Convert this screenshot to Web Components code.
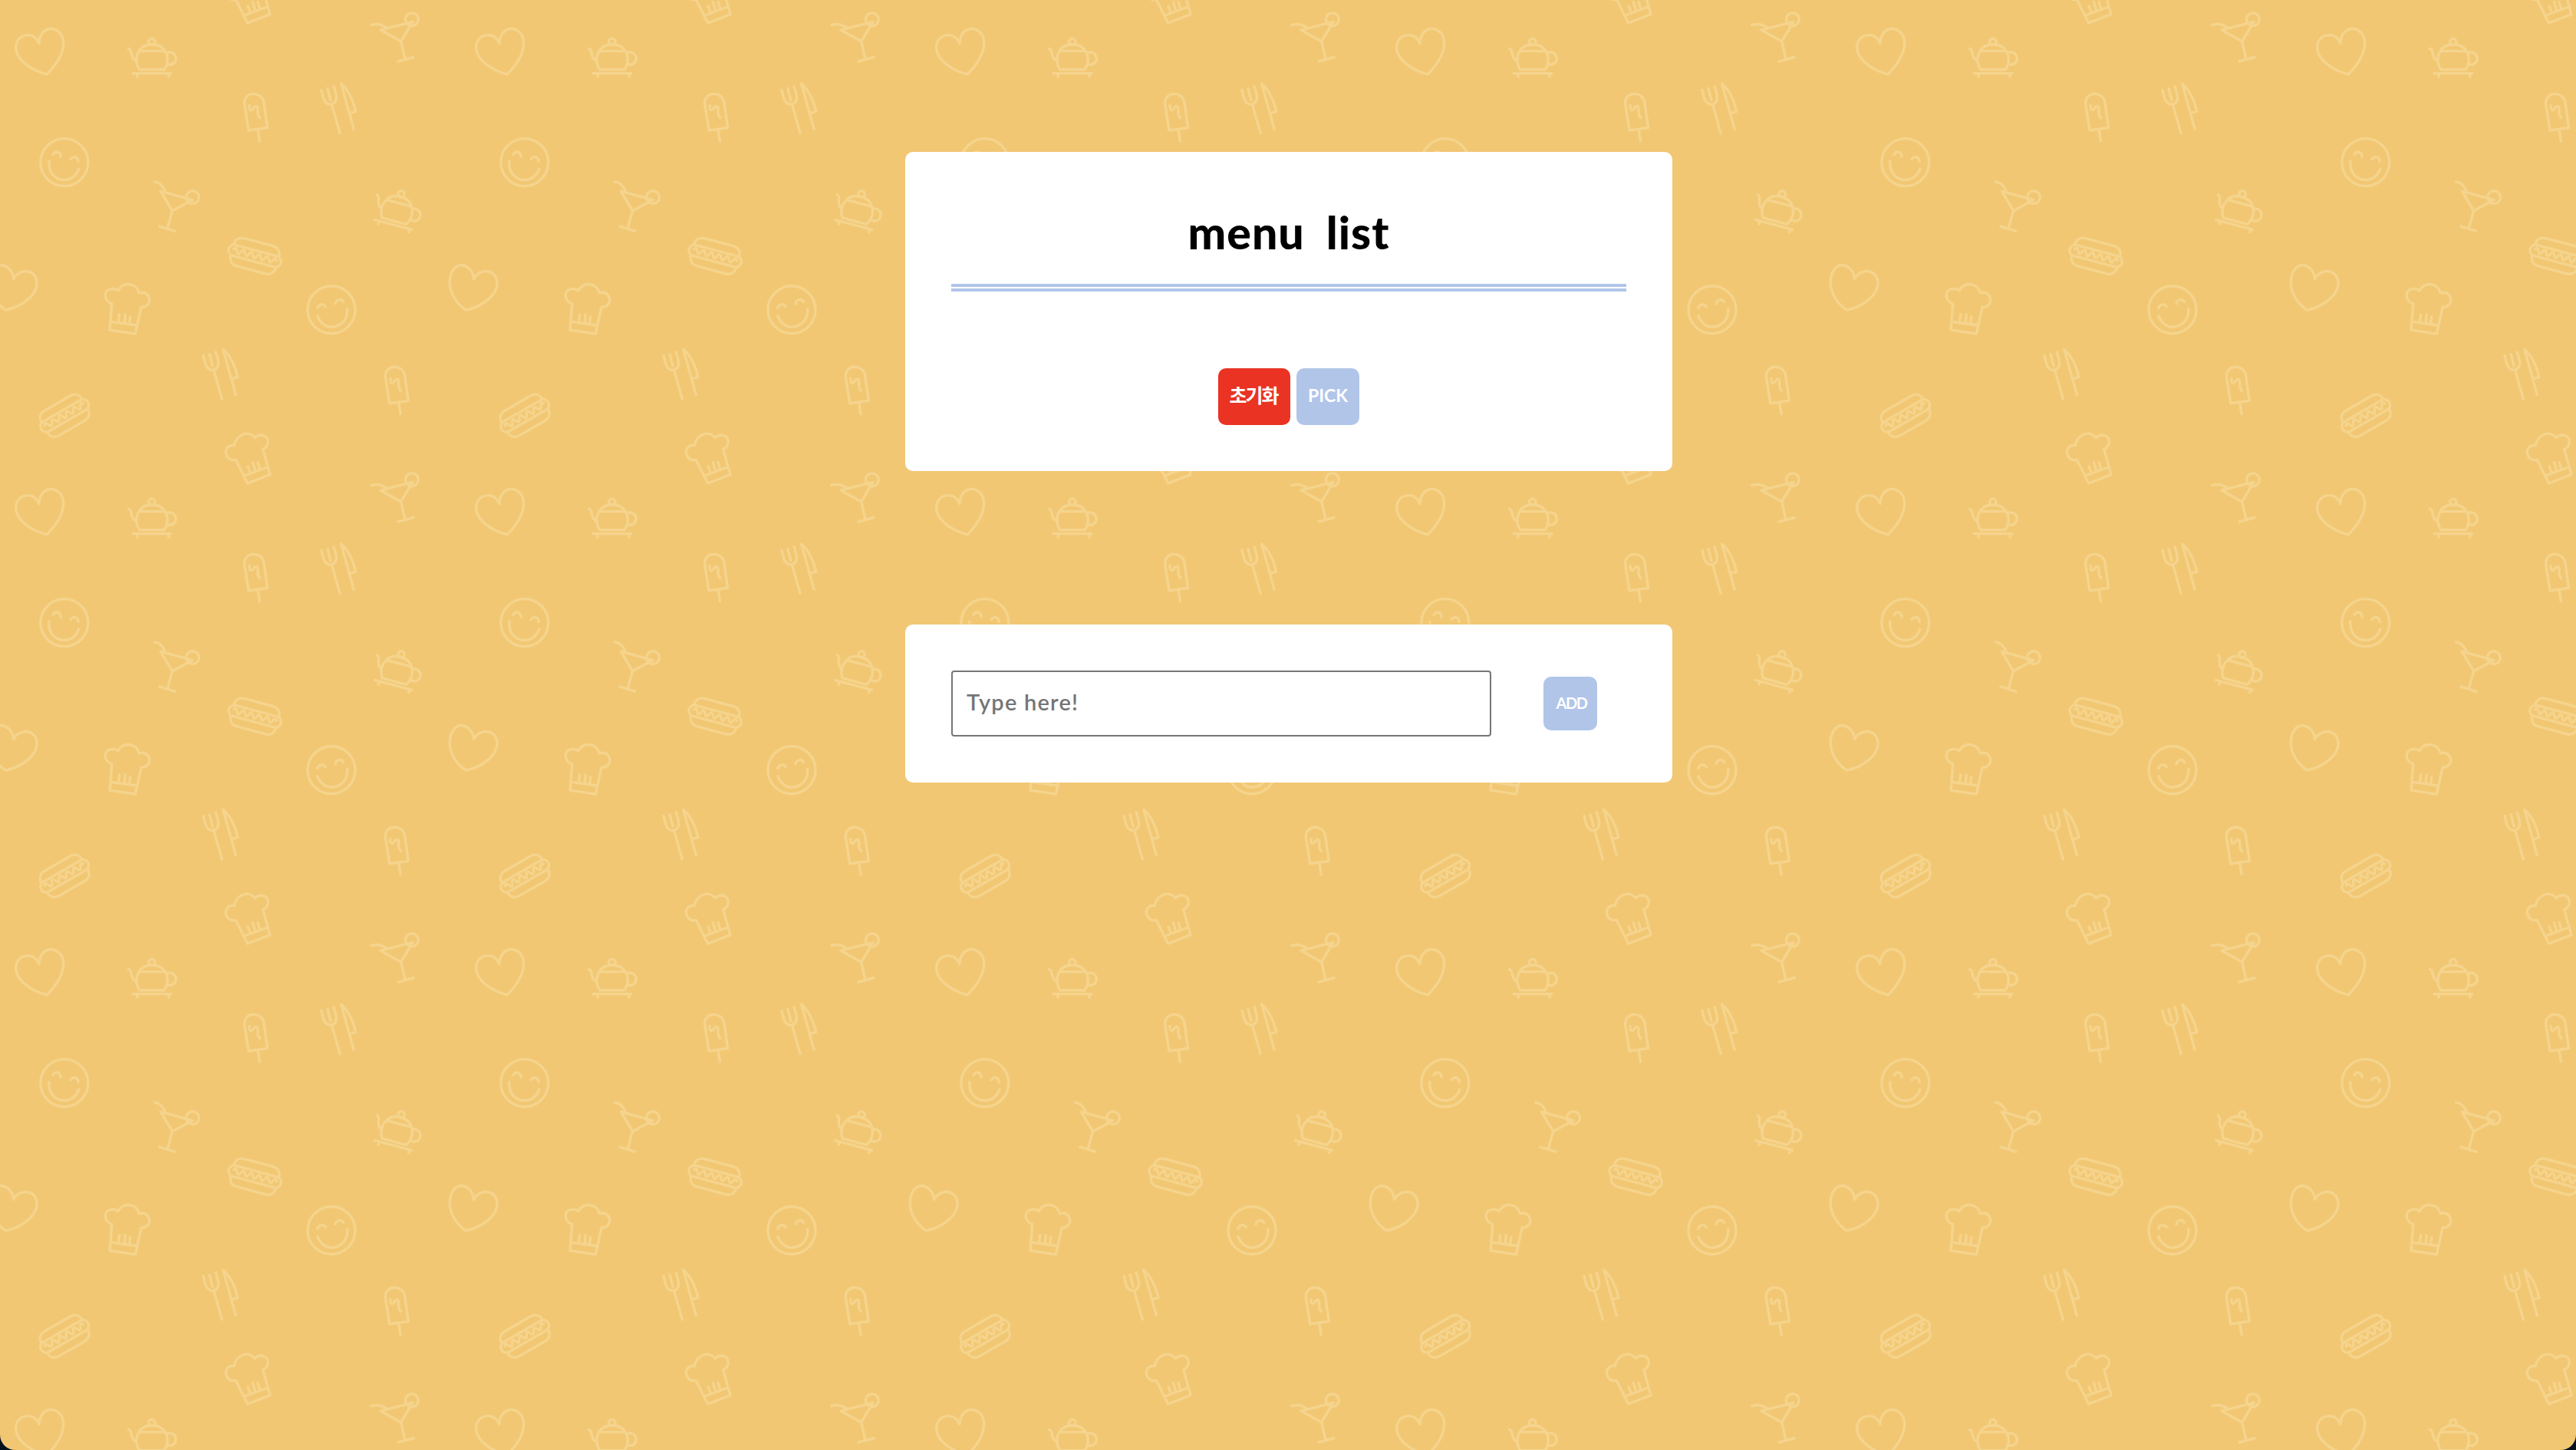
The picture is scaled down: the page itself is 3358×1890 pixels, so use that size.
<!DOCTYPE html>
<html lang="ko">
<head>
<meta charset="utf-8">
<title>menu list</title>
<style>
  html, body { margin: 0; height: 100%; background: #04121f; overflow: hidden; }
  body { font-family: Lato, "Noto Sans CJK KR", sans-serif; }
</style>
</head>
<body>
<menu-app></menu-app>

<script>
const define = (name, html) => customElements.define(name, class extends HTMLElement {
  constructor() {
    super();
    const t = document.createElement('template');
    t.innerHTML = html;
    this.attachShadow({ mode: 'open' }).append(t.content.cloneNode(true));
  }
});

// Repeating 600px tile of food doodles.
define('food-pattern', `
<style>
  :host { display: block; overflow: hidden; background: #f2c773; }
  svg { display: block; width: 100%; height: 100%; }
</style>
<svg aria-hidden="true">
  <defs>
    <g id="pot">
      <circle cx="517" cy="142" r="11"/>
      <path d="M473 174C490 144 545 144 562 174M474 174H562C573 190 574 215 560 237H475C461 215 462 190 474 174ZM567 180C585 173 599 184 599 199C599 215 583 224 570 218M434 165C450 168 445 178 449 188C452 200 458 206 467 208M449 250H586M468 250V265M575 250V265"/>
    </g>
    <path id="pop" d="M847 444L833 355C829 309 894 309 899 350L911 435ZM878 440L885 484M850 356C848 380 858 378 864 368C872 357 880 362 878 375C877 390 880 398 888 403"/>
    <path id="cutlery" d="M1094 303L1102 335C1108 352 1118 357 1130 355C1146 350 1148 338 1145 322L1136 291M1115 298L1127 345M1130 355L1159 457M1206 443L1162 285C1190 310 1205 350 1212 380L1191 385"/>
    <g id="dog">
      <rect x="-92" y="-19" width="184" height="38" rx="19"/>
      <path d="M-80 -17C-80 -38 -68 -49 -50 -49H50C68 -49 80 -38 80 -17M-80 17C-80 38 -68 49 -50 49H50C68 49 80 38 80 17M-77 -1q7 -17 14 0t14 0t14 0t14 0t14 0t14 0t14 0t14 0t14 0t14 0t14 0"/>
    </g>
    <path id="heart" d="M46 950C44 922 24 904 2 903C-20 905 -36 930 -36 962C-36 1000 -12 1035 19 1056C75 1045 125 1005 126 965C124 935 105 922 82 924C62 928 52 936 46 950Z"/>
    <path id="hat" stroke-width="10" d="M82 178C50 185 35 150 48 132C55 122 65 120 76 122C80 88 125 55 157 92C180 70 210 85 208 110C206 122 200 132 188 136L216 236L128 270ZM116 240L205 207M128 200L138 226M147 184L158 220M167 184L176 214"/>
    <pattern id="tile" width="600" height="600" patternUnits="userSpaceOnUse">
      <g fill="none" stroke="#f5d48d" stroke-width="8.9" stroke-linejoin="round">
        <g transform="scale(.38265)">
          <path d="M133 148C120 118 98 118 88 120C62 124 50 148 55 172C62 205 105 240 160 253C190 222 218 180 216 142C214 112 190 96 170 98C148 101 134 120 133 148Z"/>
          <use href="#heart"/><use href="#heart" x="1568"/>
          <use href="#pot"/>
          <use href="#pot" transform="translate(1367 661) rotate(15) translate(-517 -142)"/>
          <circle cx="1403" cy="66" r="22"/>
          <path d="M1406 74L1296 102L1366 141ZM1366 141L1380 202M1353 210L1412 194M1261 86C1280 80 1295 80 1318 95"/>
          <circle cx="656" cy="672" r="22"/>
          <path d="M547 651L656 681L587 718ZM587 718L571 775M540 770L599 788M523 619C545 620 552 632 563 650"/>
          <use href="#pop"/><use href="#pop" x="480" y="930"/>
          <use href="#cutlery"/><use href="#cutlery" x="-402" y="905"/>
          <circle cx="219" cy="553" r="81"/>
          <path d="M167 546C163 585 185 612 219 613C245 612 262 595 270 572M180 530C182 512 207 512 207 537M239 546C245 530 268 530 267 554"/>
          <circle cx="1129" cy="1055" r="81"/>
          <path d="M1080 1073C1090 1100 1110 1114 1130 1114C1165 1112 1187 1085 1183 1048M1081 1053C1083 1033 1105 1033 1110 1048M1142 1038C1142 1018 1168 1014 1170 1032"/>
          <use href="#dog" transform="translate(868 872) rotate(15)"/>
          <use href="#dog" transform="translate(220 1416) rotate(-30)"/>
          <path d="M381 1034C355 1028 350 990 375 985C388 982 396 984 402 990C420 958 465 962 474 998C505 990 515 1020 505 1035C498 1045 490 1047 481 1046L461 1137L374 1124ZM378 1096L466 1108M407 1068L404 1098M427 1068L424 1100M444 1075L441 1100"/>
        </g>
        <use href="#hat" transform="translate(280 540) scale(.3333)"/>
        <use href="#hat" transform="translate(280 -60) scale(.3333)"/>
      </g>
    </pattern>
  </defs>
  <rect width="100%" height="100%" fill="url(#tile)"/>
</svg>`);

define('menu-card', `
<style>
  :host { display: block; box-sizing: border-box; width: 1000px; padding: 60px; background: #fff; border-radius: 10px; }
</style>
<slot></slot>`);

define('menu-title', `
<style>
  :host { display: block; }
  h1 { margin: 0; height: 112px; box-sizing: border-box; padding-top: 3px; text-align: center;
       font-size: 59px; line-height: 84px; font-weight: 900; letter-spacing: 1px; word-spacing: 13px; color: #000; }
  .rule { height: 2px; border: solid #b1c5e9; border-width: 4px 0; }
</style>
<h1><slot></slot></h1><div class="rule"></div>`);

define('menu-button', `
<style>
  :host { display: block; }
  button { display: flex; align-items: center; justify-content: center; box-sizing: border-box;
    width: var(--w); height: var(--h, 74px); padding: var(--pad, 0 0 3px); border: 0; border-radius: 10px;
    background: var(--bg, #b1c5e9); color: #fff; font: inherit; font-weight: 700;
    font-size: var(--size, 24px); line-height: 1; letter-spacing: var(--ls, 0); white-space: nowrap; }
</style>
<button type="button"><slot></slot></button>`);

define('menu-field', `
<style>
  :host { display: block; }
  input { display: block; box-sizing: border-box; width: 704px; height: 86px; margin: 0; padding: 0 18px 6px;
    border: 2px solid #767676; border-radius: 4px; background: #fff; outline: 0;
    font: inherit; font-size: 29px; font-weight: 600; letter-spacing: 1.2px; }
  input::placeholder { color: #757575; opacity: 1; }
</style>
<input type="text" placeholder="Type here!">`);

define('menu-app', `
<style>
  :host { display: grid; height: 100vh; overflow: hidden; border-radius: 0 0 20px 20px; }
  food-pattern, main { grid-area: 1 / 1; min-height: 0; }
  main { z-index: 1; display: flex; flex-direction: column; align-items: center; gap: 200px; padding: 198px 0 0 2px; box-sizing: border-box; }
  .actions { display: flex; justify-content: center; gap: 8px; margin-top: 100px; }
  .entry { display: flex; align-items: center; gap: 68px; }
</style>
<food-pattern></food-pattern>
<main>
  <menu-card>
    <menu-title>menu list</menu-title>
    <div class="actions">
      <menu-button style="--w:94px; --bg:#ea3323; --size:25px; --ls:-2px; --pad:0 2px 3px 0">초기화</menu-button>
      <menu-button style="--w:82px; --size:23px; --ls:0">PICK</menu-button>
    </div>
  </menu-card>
  <menu-card>
    <div class="entry">
      <menu-field></menu-field>
      <menu-button style="--w:70px; --h:70px; --size:20px; --ls:-1.5px; --pad:0 0 3px 3px">ADD</menu-button>
    </div>
  </menu-card>
</main>`);
</script>
</body>
</html>
